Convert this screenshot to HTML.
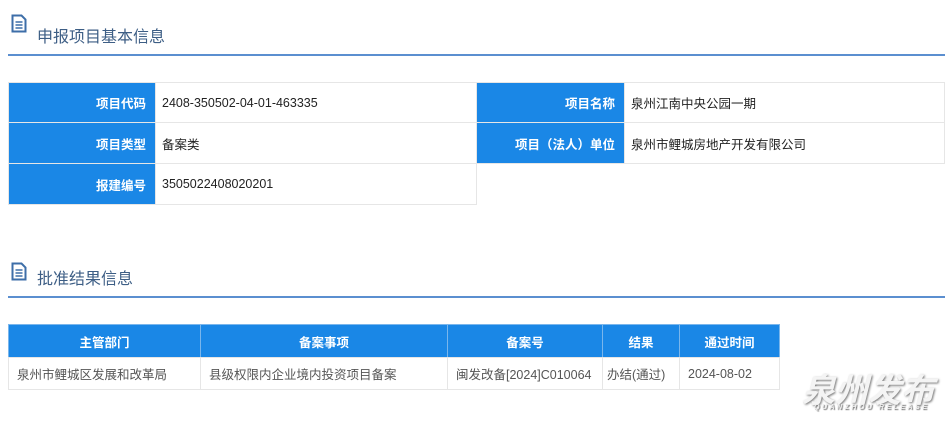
<!DOCTYPE html>
<html><head><meta charset="utf-8"><style>
*{margin:0;padding:0;box-sizing:border-box}
body{width:951px;height:422px;background:#fff;position:relative;overflow:hidden;font-family:"Liberation Sans","Noto Sans CJK SC",sans-serif;font-size:12.5px;color:#333}
.a{position:absolute}
.t{font-size:16px;color:#3d5e85}
.line{height:2px;background:#5b8fd0;left:8px;width:937px}
.lb{background:#1a87e6;color:#fff;font-weight:bold;text-align:right;padding-right:9px;border:1px solid #e6e6e6}
.v{border:1px solid #e6e6e6;padding-left:6px;color:#222}
.c{display:flex;align-items:center}
.h{background:#1a87e6;color:#fff;font-weight:bold;justify-content:center;border:1px solid #7ab6ec}
.d{border:1px solid #e6e6e6;padding-left:8px;color:#555}
</style></head><body>
<svg class="a" style="left:11px;top:14px" width="16" height="19" viewBox="0 0 16 19"><path d="M1.5 1.5h9l4 4v12h-13z" fill="none" stroke="#3d6ea8" stroke-width="2"/><path d="M4.5 8h7M4.5 11h7M4.5 14h7" stroke="#3d6ea8" stroke-width="1.6"/></svg>
<div class="a t" style="left:37px;top:23px">申报项目基本信息</div>
<div class="a line" style="top:54px"></div>

<div class="a lb c" style="left:8px;top:82px;width:148px;height:41px;justify-content:flex-end">项目代码</div>
<div class="a v c" style="left:155px;top:82px;width:322px;height:41px">2408-350502-04-01-463335</div>
<div class="a lb c" style="left:476px;top:82px;width:149px;height:41px;justify-content:flex-end">项目名称</div>
<div class="a v c" style="left:624px;top:82px;width:321px;height:41px">泉州江南中央公园一期</div>
<div class="a lb c" style="left:8px;top:122px;width:148px;height:42px;justify-content:flex-end">项目类型</div>
<div class="a v c" style="left:155px;top:122px;width:322px;height:42px">备案类</div>
<div class="a lb c" style="left:476px;top:122px;width:149px;height:42px;justify-content:flex-end">项目（法人）单位</div>
<div class="a v c" style="left:624px;top:122px;width:321px;height:42px">泉州市鲤城房地产开发有限公司</div>
<div class="a lb c" style="left:8px;top:163px;width:148px;height:42px;justify-content:flex-end">报建编号</div>
<div class="a v c" style="left:155px;top:163px;width:322px;height:42px">3505022408020201</div>

<svg class="a" style="left:11px;top:262px" width="16" height="19" viewBox="0 0 16 19"><path d="M1.5 1.5h9l4 4v12h-13z" fill="none" stroke="#3d6ea8" stroke-width="2"/><path d="M4.5 8h7M4.5 11h7M4.5 14h7" stroke="#3d6ea8" stroke-width="1.6"/></svg>
<div class="a t" style="left:37px;top:265px">批准结果信息</div>
<div class="a line" style="top:296px"></div>

<div class="a h c" style="left:8px;top:324px;width:193px;height:34px">主管部门</div>
<div class="a h c" style="left:200px;top:324px;width:248px;height:34px">备案事项</div>
<div class="a h c" style="left:447px;top:324px;width:156px;height:34px">备案号</div>
<div class="a h c" style="left:602px;top:324px;width:78px;height:34px">结果</div>
<div class="a h c" style="left:679px;top:324px;width:101px;height:34px">通过时间</div>
<div class="a d c" style="left:8px;top:357px;width:193px;height:33px">泉州市鲤城区发展和改革局</div>
<div class="a d c" style="left:200px;top:357px;width:248px;height:33px">县级权限内企业境内投资项目备案</div>
<div class="a d c" style="left:447px;top:357px;width:156px;height:33px">闽发改备[2024]C010064</div>
<div class="a d c" style="left:602px;top:357px;width:78px;height:33px;padding-left:4px">办结(通过)</div>
<div class="a d c" style="left:679px;top:357px;width:101px;height:33px">2024-08-02</div>

<div class="a" style="left:802px;top:364px;font-size:33px;font-style:italic;font-weight:bold;color:#f4f4f4;text-shadow:1px 1px 2px #777;letter-spacing:0px">泉州发布</div>
<div class="a" style="left:814px;top:404px;font-size:7px;font-style:italic;font-weight:bold;color:#eee;text-shadow:1px 1px 1px #666;letter-spacing:2.5px">QUANZHOU RELEASE</div>
</body></html>
